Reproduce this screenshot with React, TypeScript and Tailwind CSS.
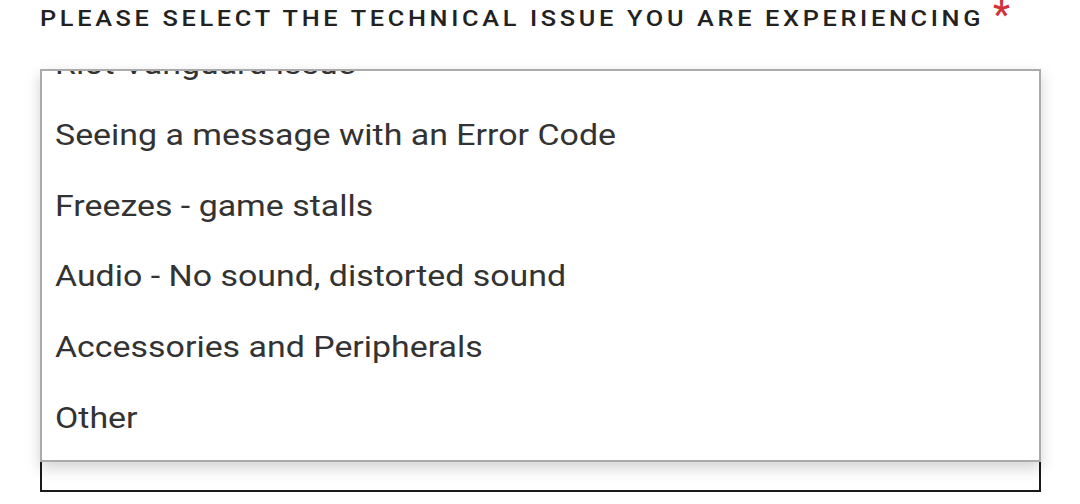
const options = [
  "Riot Vanguard issue",
  "Seeing a message with an Error Code",
  "Freezes - game stalls",
  "Audio - No sound, distorted sound",
  "Accessories and Peripherals",
  "Other",
]

export default function App() {
  return (
    <div className="relative w-[1080px] h-[504px] bg-white overflow-hidden px-[40px] font-['Roboto',sans-serif]">
      {/* Label */}
      <div className="pt-[7px] flex items-start h-[37px]">
        <span className="inline-block origin-left scale-x-[1.15] whitespace-nowrap text-[22px] leading-[24px] font-medium tracking-[3.2px] text-[#222]">
          PLEASE SELECT THE TECHNICAL ISSUE YOU ARE EXPERIENCING
        </span>
      </div>
      <span className="absolute left-[993px] -top-[4px] text-[38px] leading-[38px] font-medium text-[#d0343a]">*</span>

      {/* Closed select underneath */}
      <div className="mt-[403px] h-[52px] w-[1001px] border-2 border-[#1a1a1a]" />

      {/* Open dropdown list */}
      <div className="absolute left-[40px] top-[69px] w-[1001px] h-[393px] bg-white border-2 border-[#ababab] overflow-hidden shadow-[0_6px_14px_rgba(0,0,0,0.18)]">
        <div className="-mt-[42px]">
          {options.map((o) => (
            <div key={o} className="h-[70.75px] leading-[70.75px] pl-[13px] text-[30px] text-[#333] whitespace-nowrap">
              <span className="inline-block origin-left scale-x-[1.13]">{o}</span>
            </div>
          ))}
        </div>
      </div>
    </div>
  )
}
